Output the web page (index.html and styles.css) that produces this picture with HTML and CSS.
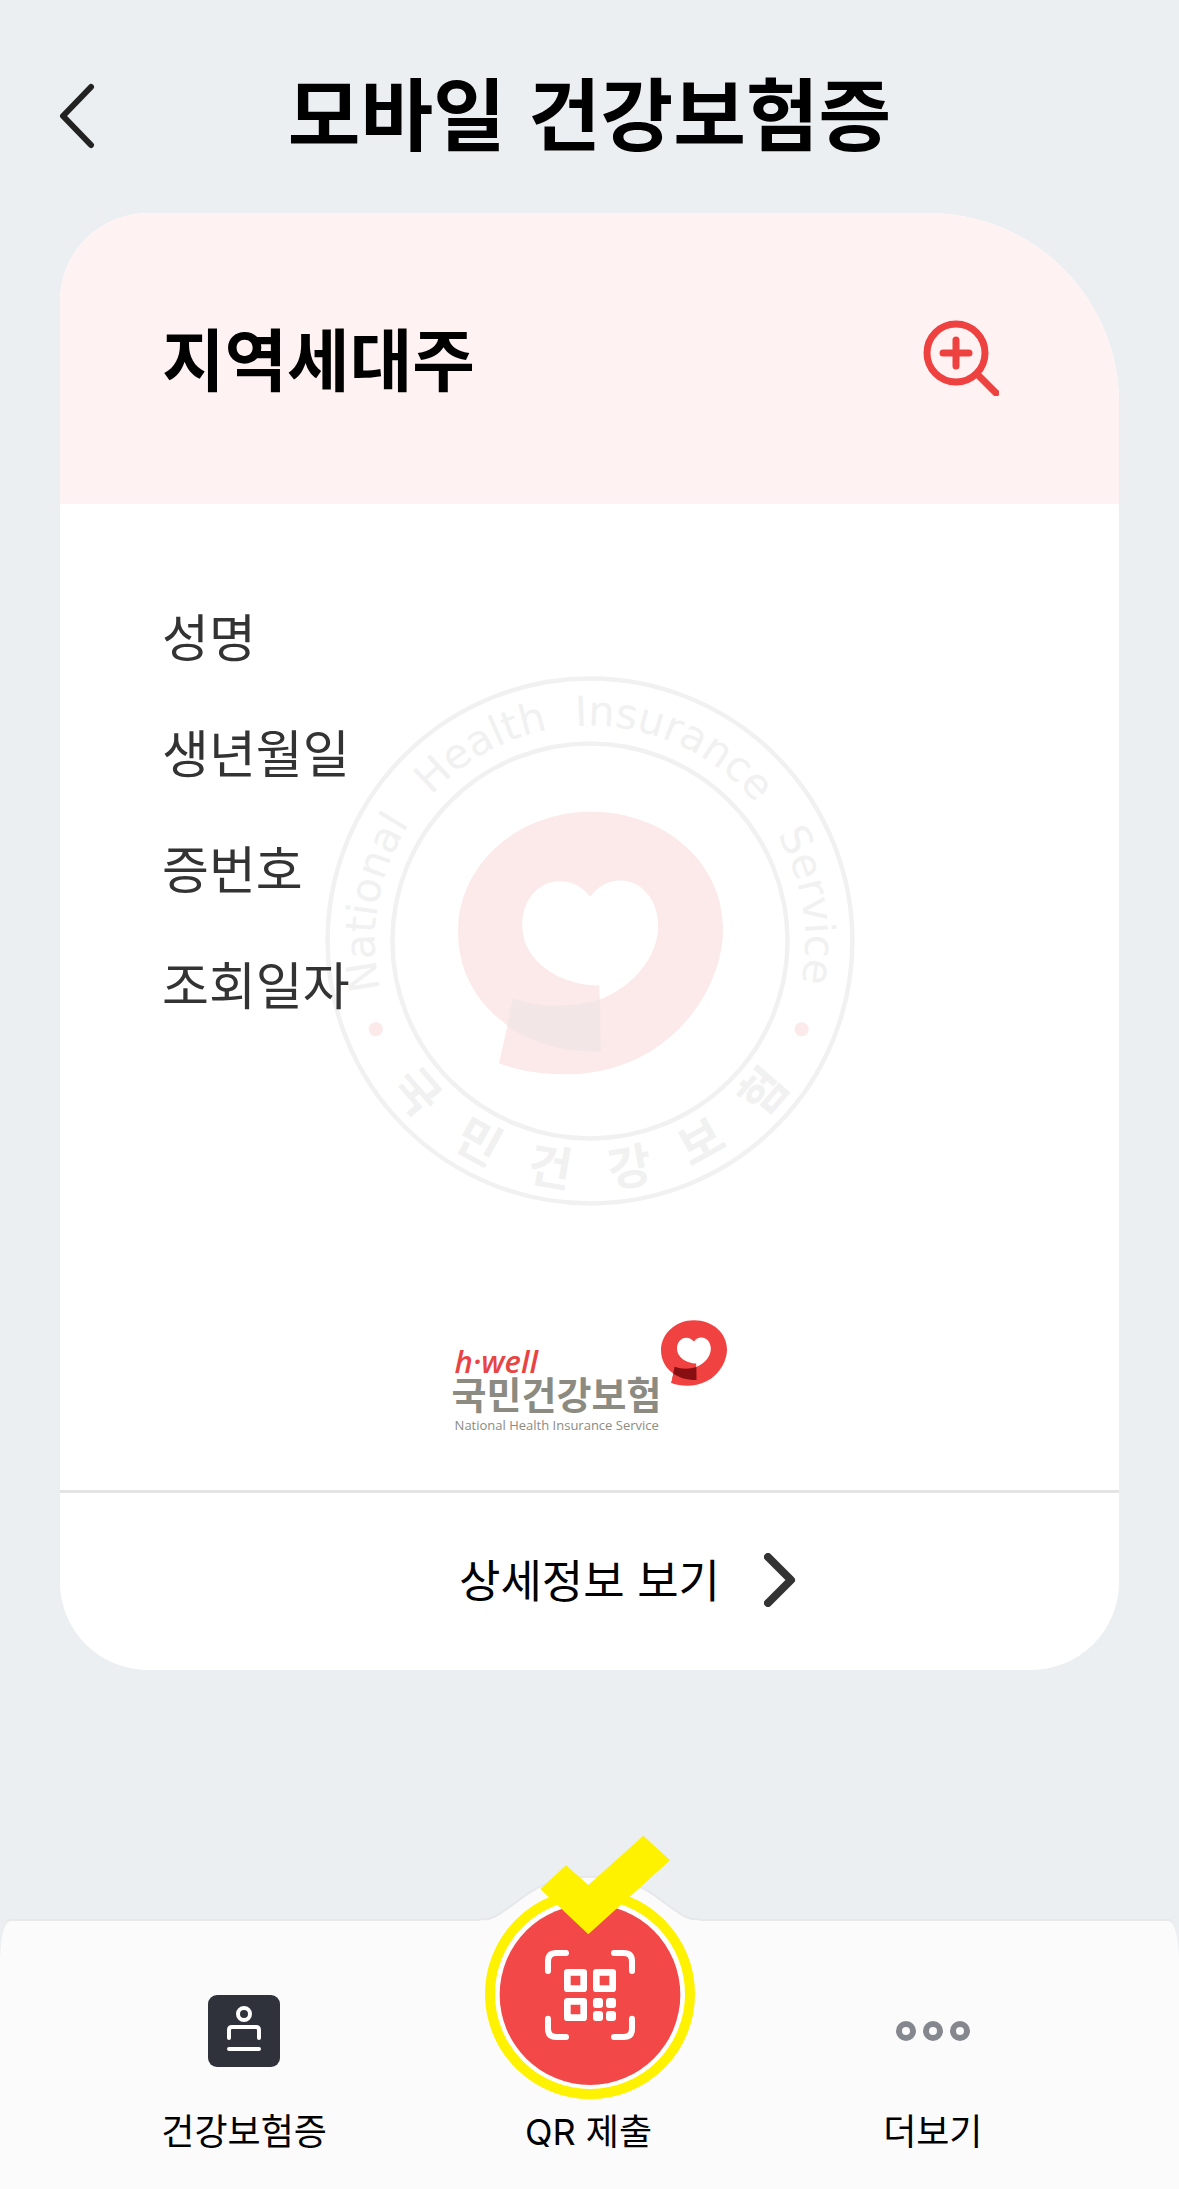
FILE: index.html
```html
<!DOCTYPE html>
<html lang="ko">
<head>
  <meta charset="UTF-8">
  <meta name="viewport" content="width=device-width, initial-scale=1.0">
  <title>모바일 건강보험증</title>
  <link rel="stylesheet" href="styles.css">
</head>
<body>
  <!-- Shared speech bubble + heart symbol -->
  <svg class="defs" aria-hidden="true">
    <symbol id="nhis-symbol" viewBox="427 438 715 709">
      <path class="symbol-body" fill-rule="evenodd" d="M561 1015 C470 950 427 860 427 762 C427 580 590 438 784 438 C985 438 1142 575 1142 755 C1142 915 1000 1147 715 1147 C650 1147 590 1137 538 1117 Z M784 667 C760 640 735 626 702 626 C640 626 600 680 600 745 C600 840 700 907 808 907 L809 945 C900 910 967 830 967 745 C967 680 925 624 865 624 C830 624 805 640 784 667 Z"/>
      <path class="symbol-body" d="M575 942 L561 1015 L538 1117 L700 1100 Z"/>
      <path class="symbol-fold" d="M575 942 C650 968 730 968 810 945 L812 1085 C720 1088 630 1065 559 1015 Z"/>
    </symbol>
  </svg>

  <header class="top-bar">
    <button class="back-button" type="button" aria-label="뒤로">
      <svg width="36" height="66" viewBox="0 0 36 66"><path d="M32 4 L4 33 L32 62"/></svg>
    </button>
    <h1>모바일 건강보험증</h1>
  </header>

  <main class="card">
    <div class="card-header">
      <h2>지역세대주</h2>
      <button class="zoom-button" type="button" aria-label="확대">
        <svg width="76" height="76" viewBox="0 0 76 76">
          <circle cx="33" cy="33" r="29"/>
          <path d="M33 20 V46 M20 33 H46 M54 54 L73 73"/>
        </svg>
      </button>
    </div>

    <div class="card-body">
      <!-- Seal watermark -->
      <svg class="seal" viewBox="68 72 1430 1430" aria-hidden="true">
        <defs>
          <path id="seal-arc" d="M217 918 A581 581 0 1 1 1329 986"/>
        </defs>
        <circle class="seal-ring" cx="783" cy="787" r="708"/>
        <circle class="seal-ring" cx="783" cy="787" r="533"/>
        <g class="seal-en">
          <text><textPath href="#seal-arc" startOffset="0">National</textPath></text>
          <text><textPath href="#seal-arc" startOffset="563">Health</textPath></text>
          <text><textPath href="#seal-arc" startOffset="1005">Insurance</textPath></text>
          <text><textPath href="#seal-arc" startOffset="1656">Service</textPath></text>
        </g>
        <g class="seal-ko">
          <text x="783" y="1453" transform="rotate(49 783 787)">국</text>
          <text x="783" y="1453" transform="rotate(29 783 787)">민</text>
          <text x="783" y="1453" transform="rotate(10 783 787)">건</text>
          <text x="783" y="1453" transform="rotate(-10 783 787)">강</text>
          <text x="783" y="1453" transform="rotate(-29 783 787)">보</text>
          <text x="783" y="1453" transform="rotate(-49 783 787)">험</text>
        </g>
        <circle class="seal-dot" cx="205" cy="1025" r="19"/>
        <circle class="seal-dot" cx="1354" cy="1025" r="19"/>
        <use href="#nhis-symbol" x="427" y="438" width="715" height="709"/>
      </svg>

      <ul class="fields">
        <li>성명</li>
        <li>생년월일</li>
        <li>증번호</li>
        <li>조회일자</li>
      </ul>

      <div class="brand">
        <div class="brand-text">
          <span class="brand-hwell">h·well</span>
          <span class="brand-ko">국민건강보험</span>
          <span class="brand-en">National Health Insurance Service</span>
        </div>
        <svg class="brand-symbol" width="66" height="66" aria-hidden="true"><use href="#nhis-symbol"/></svg>
      </div>
    </div>

    <button class="detail-button" type="button">
      <span class="detail-label">상세정보 보기</span>
      <svg width="32" height="54" viewBox="0 0 32 54"><path d="M4 4 L27 27 L4 50"/></svg>
    </button>
  </main>

  <nav class="tab-bar">
    <a class="tab" href="#card">
      <svg width="72" height="72" viewBox="0 0 72 72">
        <rect width="72" height="72" rx="9" fill="#2f323b"/>
        <g fill="none" stroke="#fff" stroke-width="4" stroke-linecap="round">
          <circle cx="36" cy="19" r="6"/>
          <path d="M21 43 V35 Q21 32 24 32 H48 Q51 32 51 35 V43 M21 54 H51"/>
        </g>
      </svg>
      <span>건강보험증</span>
    </a>
    <a class="tab tab-qr" href="#qr">
      <svg class="qr-icon" width="220" height="274" viewBox="120 60 660 822">
        <path d="M120 330 H130 C160 330 180 313 206 295 C260 257 310 200 450 200 C590 200 640 257 694 295 C720 313 740 330 770 330 H780 V420 H120 Z" fill="#fbfbfb"/>
        <path d="M120 328 H130 C160 328 180 311 206 293 C260 255 310 200 450 200 C590 200 640 255 694 293 C720 311 740 328 770 328 H780" fill="none" stroke="#e6e8ea" stroke-width="6"/>
        <circle cx="450" cy="552" r="300" fill="#fff" stroke="#fff200" stroke-width="30"/>
        <circle cx="450" cy="554" r="271" fill="#f24848"/>
        <g fill="none" stroke="#fff" stroke-width="18" stroke-linecap="round">
          <path d="M324 483 V454 Q324 429 349 429 H378 M522 429 H551 Q576 429 576 454 V483 M324 626 V656 Q324 681 349 681 H378 M522 681 H551 Q576 681 576 656 V626"/>
        </g>
        <g fill="none" stroke="#fff" stroke-width="20" stroke-linejoin="round">
          <rect x="382" y="487" width="49" height="49"/>
          <rect x="469" y="487" width="49" height="49"/>
          <rect x="382" y="574" width="49" height="49"/>
        </g>
        <g fill="#fff">
          <rect x="459" y="564" width="30" height="30" rx="9"/>
          <rect x="498" y="564" width="30" height="30" rx="9"/>
          <rect x="459" y="603" width="30" height="30" rx="9"/>
          <rect x="498" y="603" width="30" height="30" rx="9"/>
        </g>
        <path d="M301 237 L378 166 L445 225 L610 77 L690 151 L445 373 Z" fill="#fff200"/>
      </svg>
      <span>QR 제출</span>
    </a>
    <a class="tab" href="#more">
      <svg width="74" height="72" viewBox="0 0 74 72">
        <g fill="none" stroke="#84878e" stroke-width="6">
          <circle cx="10" cy="36" r="7"/>
          <circle cx="37" cy="36" r="7"/>
          <circle cx="64" cy="36" r="7"/>
        </g>
      </svg>
      <span>더보기</span>
    </a>
  </nav>
</body>
</html>
```

FILE: styles.css
```css
* {
  box-sizing: border-box;
}

body {
  display: flex;
  flex-direction: column;
  min-height: 100vh;
  margin: 0;
  background-color: #ebeff2;
  color: #000;
  font-family: "Noto Sans CJK KR", "Noto Sans", sans-serif;
}

h1,
h2 {
  margin: 0;
  font-weight: bold;
}

button {
  padding: 0;
  border: none;
  background: none;
  color: inherit;
  font-family: inherit;
  cursor: pointer;
}

svg {
  display: block;
}

.defs {
  position: absolute;
  width: 0;
  height: 0;
}

/* Top bar */
.top-bar {
  display: grid;
  grid-template-columns: 1fr auto 1fr;
  align-items: center;
  padding: 51px 59px 32px;
}

.top-bar h1 {
  padding-bottom: 10px;
  font-size: 79px;
  line-height: 120px;
}

.back-button {
  justify-self: start;
}

.back-button svg {
  fill: none;
  stroke: #222;
  stroke-width: 6;
  stroke-linecap: round;
  stroke-linejoin: round;
}

/* Insurance card */
.card {
  margin: 0 60px 60px;
  border-radius: 88px 190px 88px 88px;
  background-color: #fff;
  overflow: hidden;
}

.card-header {
  display: flex;
  justify-content: space-between;
  align-items: center;
  padding: 95px 120px 96px 102px;
  background-color: #fff2f2;
}

.card-header h2 {
  padding-bottom: 2px;
  font-size: 68px;
  line-height: 98px;
}

.zoom-button svg {
  fill: none;
  stroke: #ee4240;
  stroke-width: 7;
  stroke-linecap: round;
}

.card-body {
  position: relative;
  padding: 73px 102px 55px;
  border-bottom: 3px solid #e4e4e4;
}

.fields {
  position: relative;
  margin: 0 0 279px;
  padding: 0;
  list-style: none;
  color: #333;
  font-size: 51px;
  line-height: 116px;
}

/* Seal watermark */
.seal {
  position: absolute;
  top: 172px;
  left: 50%;
  width: 530px;
  margin-left: -265px;
}

.seal-ring {
  fill: none;
  stroke: #f1f1f1;
  stroke-width: 12;
}

.seal-en {
  fill: #f1f1f1;
  font-family: "DejaVu Sans", sans-serif;
  font-size: 112px;
}

.seal-ko {
  fill: #f1f1f1;
  font-size: 128px;
  font-weight: bold;
  text-anchor: middle;
}

.seal-dot {
  fill: #fce9e9;
}

.seal {
  --symbol-body: #fce9e9;
  --symbol-fold: #f2e6e6;
}

.symbol-body {
  fill: var(--symbol-body);
}

.symbol-fold {
  fill: var(--symbol-fold);
}

/* Brand logo */
.brand {
  display: flex;
  justify-content: center;
  align-items: flex-start;
  --symbol-body: #f04241;
  --symbol-fold: #870f12;
}

.brand-text {
  display: flex;
  flex-direction: column;
  padding-top: 28px;
  color: #8b8b82;
}

.brand-hwell {
  padding-left: 3px;
  color: #e94444;
  font-family: "Open Sans", sans-serif;
  font-size: 31px;
  font-style: italic;
  font-weight: 600;
  line-height: 27px;
}

.brand-ko {
  font-size: 38px;
  font-weight: bold;
  line-height: 36px;
}

.brand-en {
  padding: 4px 0 0 3px;
  font-family: "Open Sans", sans-serif;
  font-size: 13px;
  line-height: 20px;
}

/* Detail link */
.detail-button {
  display: grid;
  grid-template-columns: 1fr auto 1fr;
  align-items: center;
  width: 100%;
  padding: 55px 0 58px;
}

.detail-label {
  grid-column: 2;
  padding-bottom: 2px;
  font-size: 45px;
  line-height: 62px;
}

.detail-button svg {
  margin-left: 44px;
  fill: none;
  stroke: #333;
  stroke-width: 8;
  stroke-linecap: round;
  stroke-linejoin: round;
}

/* Bottom tab bar */
.tab-bar {
  position: relative;
  display: flex;
  margin-top: auto;
  padding: 74px 72px 30px;
  border-top: 2px solid #e6e8ea;
  border-radius: 10px 10px 0 0 / 40px 40px 0 0;
  background-color: #fbfbfb;
}

.tab {
  display: flex;
  flex: 1;
  flex-direction: column;
  align-items: center;
  justify-content: flex-end;
  gap: 38px;
  color: #000;
  font-family: "Inter", "Noto Sans CJK KR", sans-serif;
  font-size: 36px;
  line-height: 54px;
  text-decoration: none;
}

.tab:last-child {
  padding-right: 2px;
}

/* The QR button rises above the bar */
.qr-icon {
  position: absolute;
  top: -91px;
  left: 50%;
  margin-left: -110px;
}
```
